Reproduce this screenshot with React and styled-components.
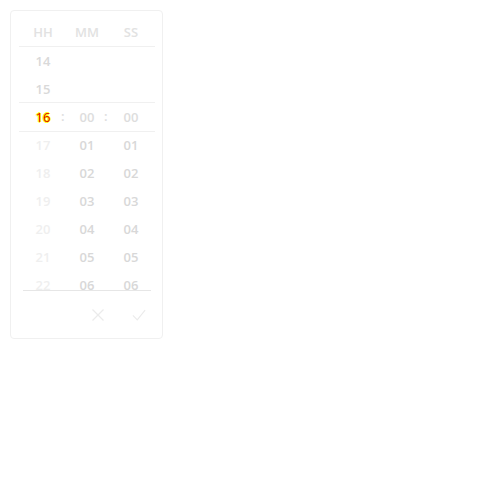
import React from 'react'
import styled, { createGlobalStyle } from 'styled-components'

const GlobalStyle = createGlobalStyle`
  body {
    margin: 0;
    background: #fff;
    font-family: "Open Sans", "Noto Sans", sans-serif;
  }
`

const hours = ['14', '15', '16', '17', '18', '19', '20', '21', '22']
const minutes = ['00', '01', '02', '03', '04', '05', '06']

const App = () => {
  return (
    <>
      <GlobalStyle />
      <Card>
        <Header>
          <HeadCell>HH</HeadCell>
          <HeadCell>MM</HeadCell>
          <HeadCell>SS</HeadCell>
        </Header>
        <Body>
          <Column>
            {hours.map((h, i) => (
              <Cell key={h} $tone={i < 2 ? 'mid' : i === 2 ? 'sel' : 'faint'}>
                {i === 2 ? <Current>{h}</Current> : h}
              </Cell>
            ))}
          </Column>
          <Column $offset={2}>
            {minutes.map((m, i) => (
              <Cell key={m} $tone={i === 0 ? 'sel' : 'dark'}>{m}</Cell>
            ))}
          </Column>
          <Column $offset={2}>
            {minutes.map((m, i) => (
              <Cell key={m} $tone={i === 0 ? 'sel' : 'dark'}>{m}</Cell>
            ))}
          </Column>
          <Band>
            <Colon style={{ left: 44 }}>:</Colon>
            <Colon style={{ left: 87 }}>:</Colon>
          </Band>
        </Body>
        <Footer>
          <IconButton>
            <svg width="14" height="14" viewBox="0 0 14 14">
              <path d="M1.5 1.5 L12.5 12.5 M12.5 1.5 L1.5 12.5" stroke="#ebebeb" strokeWidth="1.3" fill="none" />
            </svg>
          </IconButton>
          <IconButton>
            <svg width="16" height="14" viewBox="0 0 16 14">
              <path d="M1 7.5 L6 12.5 L15 1.5" stroke="#ebebeb" strokeWidth="1.3" fill="none" />
            </svg>
          </IconButton>
        </Footer>
      </Card>
    </>
  )
}

export default App

const Card = styled.div`
  margin: 10px 0 0 10px;
  width: 153px;
  height: 329px;
  box-sizing: border-box;
  border: 1px solid #f0f0f0;
  border-radius: 4px;
  padding: 0 7px 0 8px;
  display: flex;
  flex-direction: column;
`
const Header = styled.div`
  display: grid;
  grid-template-columns: 44px 44px 44px;
  padding-left: 2px;
  height: 35px;
  align-items: end;
  border-bottom: 1px solid #f0f0f0;
`
const HeadCell = styled.div`
  text-align: center;
  font-size: 13px;
  font-weight: 600;
  color: #e2e2e2;
  line-height: 28px;
`
const Body = styled.div`
  position: relative;
  height: 244px;
  display: grid;
  grid-template-columns: 44px 44px 44px;
  padding-left: 2px;
  overflow: hidden;
  &::after {
    content: '';
    position: absolute;
    left: 4px;
    right: 4px;
    bottom: 0;
    border-bottom: 1px solid #e6e6e6;
  }
`
const Column = styled.div`
  display: flex;
  flex-direction: column;
  padding-top: ${p => (p.$offset || 0) * 28}px;
`
const toneColors = {
  mid: '#d9d9d9',
  sel: '#dddddd',
  dark: '#d8d8d8',
  faint: '#efefef',
}
const Cell = styled.div`
  height: 28px;
  line-height: 28px;
  text-align: center;
  font-size: 13px;
  font-weight: 600;
  color: ${p => toneColors[p.$tone]};
`
const Current = styled.span`
  color: #e00000;
  text-shadow: 1px 0 0 #ffff00, -1px 0 0 #ffff00, 0 1px 0 #ffff00, 0 -1px 0 #ffff00;
  font-weight: 400;
`
const Band = styled.div`
  position: absolute;
  left: -2px;
  right: 0;
  top: 55px;
  height: 28px;
  border-top: 1px solid #f0f0f0;
  border-bottom: 1px solid #f0f0f0;
  pointer-events: none;
`
const Colon = styled.span`
  position: absolute;
  top: 0;
  line-height: 27px;
  font-size: 13px;
  font-weight: 600;
  color: #dddddd;
`
const Footer = styled.div`
  flex: 1;
  display: flex;
  justify-content: flex-end;
  align-items: center;
  gap: 27px;
  padding-right: 9px;
`
const IconButton = styled.div`
  display: flex;
  align-items: center;
  justify-content: center;
  width: 14px;
  height: 14px;
`
